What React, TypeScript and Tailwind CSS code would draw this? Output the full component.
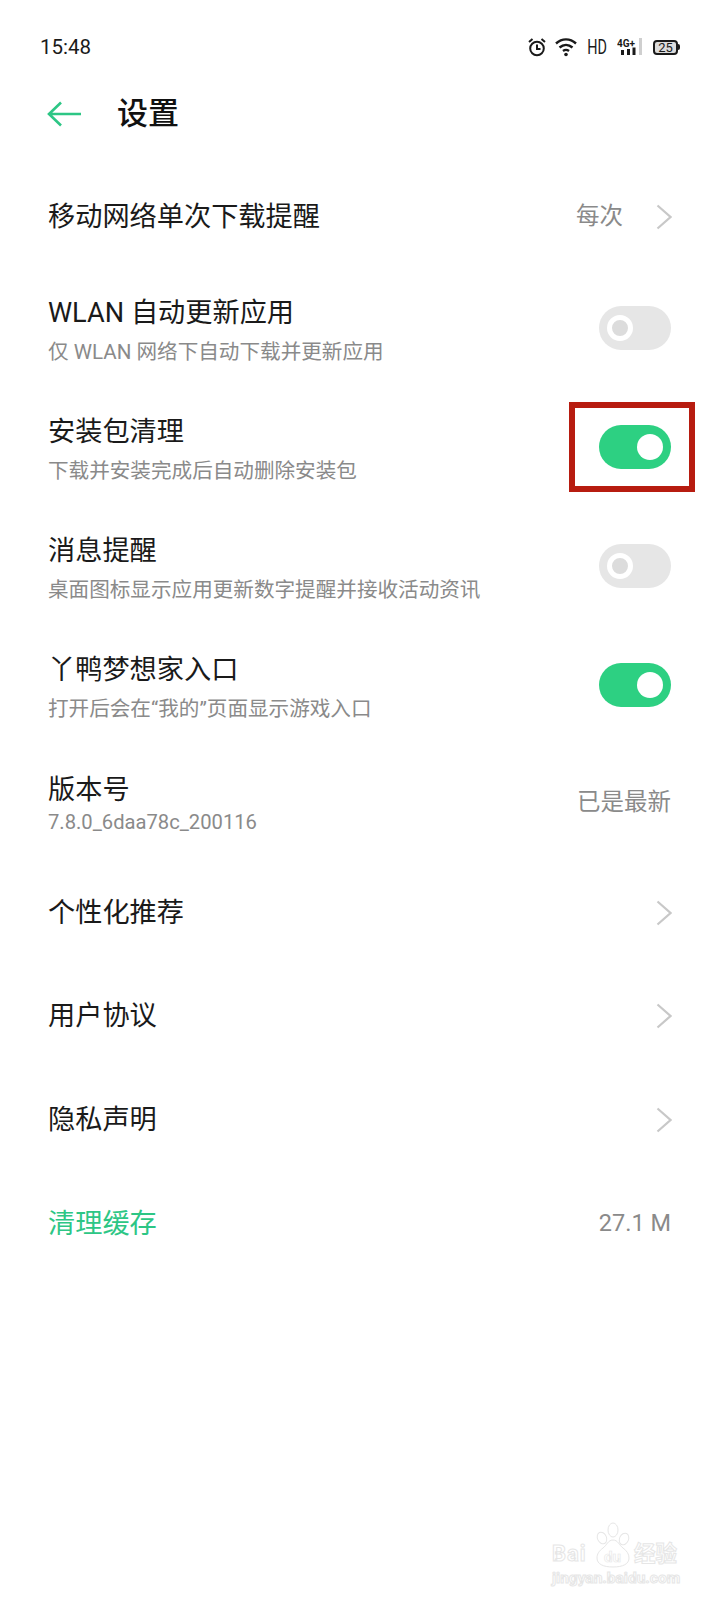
import type { ReactNode } from 'react'

const FONT = "font-['Roboto','Noto_Sans_CJK_SC',sans-serif]"

function Chevron() {
  return (
    <svg width="16" height="26" viewBox="0 0 16 26" fill="none" className="-mr-px ml-[33px]">
      <path d="M1.5 1.500 14.500 13 1.500 24.500" stroke="#c8c8c8" strokeWidth="2.2" />
    </svg>
  )
}

function Toggle({ on }: { on?: boolean }) {
  return (
    <div className={`flex h-11 w-[72px] items-center rounded-full px-2 ${on ? 'justify-end bg-[#2dd082]' : 'justify-start bg-[#e6e6e6]'}`}>
      {on ? (
        <div className="h-[26px] w-[26px] rounded-full bg-white" />
      ) : (
        <div className="h-[26px] w-[26px] rounded-full border-[5px] border-white bg-[#dcdcdc]" />
      )}
    </div>
  )
}

function Row({ title, sub, height, children, green, tight }: { title: string; sub?: string; height: string; children?: ReactNode; green?: boolean; tight?: boolean }) {
  return (
    <div className={`flex items-center justify-between ${height}`}>
      <div className={`flex flex-col ${sub && !tight ? 'pt-[5px]' : ''}`}>
        <div className={`text-[27.2px] leading-[36px] ${green ? 'text-[#2dc685]' : 'text-[#1a1a1a]'}`}>{title}</div>
        {sub && <div className={`leading-[26px] text-[#8a8a8a] ${tight ? 'mt-px text-[20.2px]' : 'mt-2 text-[20.6px]'}`}>{sub}</div>}
      </div>
      <div className="flex items-center text-[23.5px] text-[#8a8a8a]">{children}</div>
    </div>
  )
}

function StatusIcons() {
  return (
    <div className="flex h-[22px] items-center text-[#1a1a1a]">
      <svg width="20" height="20" viewBox="0 0 20 20" fill="none" stroke="#1a1a1a" strokeWidth="2">
        <circle cx="10" cy="11.500" r="6.800" />
        <path d="M10 7.500v4.500h3.500M2 5l3.500-3M18 5l-3.500-3" />
      </svg>
      <svg width="24" height="20" viewBox="0 0 24 20" fill="none" stroke="#1a1a1a" strokeWidth="2.400" className="ml-2">
        <path d="M1 6.500c6-5.500 14-5.500 20 0M4.500 10.500c4-3.500 9-3.500 13 0M8 14c2-1.500 4-1.500 6 0" />
        <circle cx="11" cy="17.500" r="1.800" fill="#1a1a1a" stroke="none" />
      </svg>
      <span className="ml-2 flex w-5 scale-x-[0.72] justify-center text-[20px] leading-5">HD</span>
      <svg width="27" height="20" viewBox="0 0 27 20" className="ml-[10px]">
        <text x="0" y="10" fontSize="10" fontWeight="700" fill="#1a1a1a" fontFamily="Roboto" textLength="18" lengthAdjust="spacingAndGlyphs">4G+</text>
        <rect x="4" y="13" width="3" height="5" fill="#1a1a1a" />
        <rect x="10" y="12" width="3" height="6" fill="#1a1a1a" />
        <rect x="15.500" y="10.500" width="3" height="7.500" fill="#1a1a1a" />
        <rect x="22" y="1" width="3" height="17" fill="#cfcfcf" />
      </svg>
      <div className="ml-[9px] flex items-center">
        <div className="flex h-[15px] w-[25px] items-center justify-center rounded-[4px] border-2 border-[#1a1a1a] bg-[#dcdcdc] text-[13px] leading-none">25</div>
        <div className="h-[6px] w-[2px] rounded-r bg-[#1a1a1a]" />
      </div>
    </div>
  )
}

function Watermark() {
  const outline = 'text-transparent [-webkit-text-stroke:1px_#e6e6e6]'
  return (
    <div className="absolute left-[552px] top-[1522px] flex w-[130px] flex-col">
      <div className="flex h-[46px] items-end">
        <span className={`w-10 text-[22px] font-bold leading-[28px] tracking-[1px] ${outline}`}>Bai</span>
        <svg width="42" height="46" viewBox="0 0 42 46" fill="none" stroke="#e6e6e6" strokeWidth="1" className="ml-px">
          <ellipse cx="9" cy="16" rx="4.500" ry="6" transform="rotate(-25 9 16)" />
          <ellipse cx="20" cy="8" rx="5" ry="7" />
          <ellipse cx="31" cy="17" rx="4.500" ry="6" transform="rotate(25 31 17)" />
          <path d="M20 18c-5 0-6 5-10 8-4 3-6 6-6 10 0 6 6 9 16 9s16-3 16-9c0-4-2-7-6-10-4-3-5-8-10-8z" />
          <text x="11" y="40" fontSize="15" fontWeight="700" fontFamily="Roboto" stroke="#e6e6e6" strokeWidth="0.6">du</text>
        </svg>
        <span className={`-ml-[1px] text-[21.5px] font-bold leading-[28px] ${outline}`}>经验</span>
      </div>
      <span className={`mt-[2px] text-[15.5px] font-bold leading-4 whitespace-nowrap ${outline}`}>jingyan.baidu.com</span>
    </div>
  )
}

export default function App() {
  return (
    <div className={`relative h-[1600px] w-[720px] overflow-hidden bg-white ${FONT}`}>
      {/* status bar */}
      <div className="flex h-[69px] items-end justify-between pb-[11px] pl-[40px] pr-[40px]">
        <span className="text-[20.5px] leading-[22px] text-[#1a1a1a]">15:48</span>
        <StatusIcons />
      </div>

      {/* header */}
      <div className="flex h-[89px] items-center pl-[47px]">
        <svg width="34" height="26" viewBox="0 0 34 26" fill="none" stroke="#2dc685" strokeWidth="2.600">
          <path d="M34 13H2M14 1.500 2 13l12 11.500" />
        </svg>
        <span className="ml-[36px] text-[31px] font-medium leading-10 text-[#111]">设置</span>
      </div>

      {/* list */}
      <div className="flex flex-col pl-[48px] pr-[49px] pt-2">
        <Row title="移动网络单次下载提醒" height="h-[102px]">
          每次
          <Chevron />
        </Row>
        <Row title="WLAN 自动更新应用" sub="仅 WLAN 网络下自动下载并更新应用" height="h-[119px]">
          <Toggle />
        </Row>
        <Row title="安装包清理" sub="下载并安装完成后自动删除安装包" height="h-[119px]">
          <Toggle on />
        </Row>
        <Row title="消息提醒" sub="桌面图标显示应用更新数字提醒并接收活动资讯" height="h-[119px]">
          <Toggle />
        </Row>
        <Row title="丫鸭梦想家入口" sub="打开后会在“我的”页面显示游戏入口" height="h-[119px]">
          <Toggle on />
        </Row>
        <Row title="版本号" sub="7.8.0_6daa78c_200116" height="mt-1 mb-1 h-[110px]" tight>
          已是最新
        </Row>
        <Row title="个性化推荐" height="h-[102px]">
          <Chevron />
        </Row>
        <Row title="用户协议" height="h-[104px]">
          <Chevron />
        </Row>
        <Row title="隐私声明" height="h-[104px]">
          <Chevron />
        </Row>
        <Row title="清理缓存" height="h-[104px]" green>
          27.1 M
        </Row>
      </div>

      {/* red highlight box */}
      <div className="absolute left-[569px] top-[402px] h-[90px] w-[126px] border-[6.5px] border-[#b71c10]" />

      <Watermark />
    </div>
  )
}
